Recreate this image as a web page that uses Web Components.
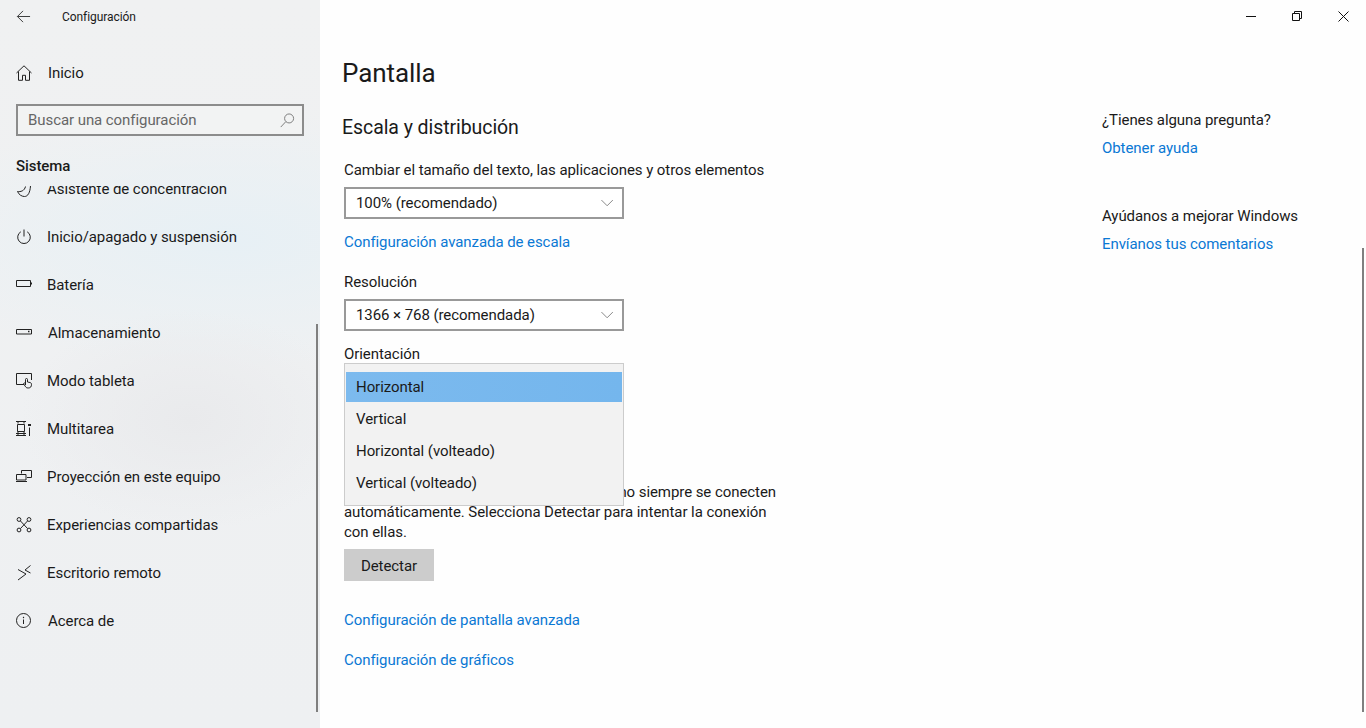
<!DOCTYPE html>
<html lang="es">
<head>
<meta charset="utf-8">
<title>Configuración</title>
<style>
html, body { margin: 0; height: 100%; overflow: hidden; }
body { font-family: Roboto, "Liberation Sans", sans-serif; color: #1a1a1a; letter-spacing: -0.07px; }
</style>
</head>
<body>
<settings-app>
    <side-nav slot="side">
        <nav-item icon="focus">Asistente de concentración</nav-item>
        <nav-item icon="power">Inicio/apagado y suspensión</nav-item>
        <nav-item icon="battery">Batería</nav-item>
        <nav-item icon="storage" wide>Almacenamiento</nav-item>
        <nav-item icon="tablet">Modo tableta</nav-item>
        <nav-item icon="multitask">Multitarea</nav-item>
        <nav-item icon="project">Proyección en este equipo</nav-item>
        <nav-item icon="shared">Experiencias compartidas</nav-item>
        <nav-item icon="remote">Escritorio remoto</nav-item>
        <nav-item icon="info" wide>Acerca de</nav-item>
    </side-nav>
    <display-page slot="page"></display-page>
</settings-app>

<script>
/* Icon paths, all on a 16x16 box */
const ICONS = {
    back: '<path d="M15 8H1.500M7.500 2 1.500 8l6 6"/>',
    home: '<path d="M.5 8 8 .8 15.500 8M2.500 6.500v8.800h4v-5h3v5h4V6.500"/>',
    focus: '<path d="M1.500 10.500c1.500 3.500 4.500 5 7 5 3.500 0 5.500-4 6-10.500M1.500 10.500c3 .5 7-.5 8-5"/>',
    power: '<path d="M8 .5v7M4.800 2.800a6.300 6.300 0 1 0 6.400 0"/>',
    battery: '<path d="M.5 3.500h14v6H.5zM15.500 5.500v2"/>',
    storage: '<path d="M.5 4.500h15v4.500H.5z"/><path d="M12 6.500h1.500" stroke-width="1.300"/>',
    tablet: '<path d="M8 11.500H.5V.5h15v6.500"/><path d="M9.500 12V6.500a1 1 0 0 1 2 0V9l2.500.5c1 .3 1.500.8 1.500 1.800 0 2.200-.8 3.700-3.300 3.700-1.700 0-2.400-.7-3-1.800L7.700 11c-.4-.9.800-1.500 1.800-.5"/>',
    multitask: '<path d="M0 .5h10M2 .5v2M8 .5v2M1.500 3.500h7v7h-7zM0 12.500h10M2 10.500v2M8 10.500v2M0 14.500h10M2 12.500v2M8 12.500v2M13.500 6.500v8.500"/><path d="M12 4h3" stroke-width="2"/>',
    project: '<path d="M5.500 4.500V1.500h10v7H11"/><path d="M.5 5.500h9.500v5.500H.5zM0 12.500h11"/>',
    shared: '<circle cx="3" cy="2.500" r="1.900"/><circle cx="13" cy="2.500" r="1.900"/><circle cx="3" cy="13" r="1.900"/><circle cx="13" cy="13" r="1.900"/><path d="m4.500 4 7 7.500M11.500 4l-7 7.500"/>',
    remote: '<path d="m2 4.500 8 4.500-8 6M14.500 .5 9 5l5.500 3"/>',
    info: '<circle cx="7.500" cy="7.500" r="7"/><path d="M7.500 6.500v4.500"/><path d="M7.500 3.800v1.400" stroke-width="1.200"/>',
    search: '<circle cx="9.700" cy="5.800" r="4.800"/><path d="M6.200 9.200.8 15"/>',
    chevron: '<path d="m.5 3.500 6.500 6.500 6.500-6.500"/>'
};

function iconSvg(name, size) {
    return `<svg width="${size}" height="${size}" viewBox="0 0 16 16" fill="none" stroke="currentColor" stroke-width="1" aria-hidden="true">${ICONS[name]}</svg>`;
}

/* Plain text link */
customElements.define('link-text', class extends HTMLElement {
    constructor() {
        super();
        this.attachShadow({ mode: 'open' }).innerHTML = `
        <style>
        :host { display: block; color: #0a78d4; font-size: 15px; line-height: 20px; }
        </style>
        <slot></slot>`;
    }
});

/* Closed combo box */
customElements.define('combo-box', class extends HTMLElement {
    constructor() {
        super();
        this.attachShadow({ mode: 'open' }).innerHTML = `
        <style>
        :host {
            display: flex; align-items: center; justify-content: space-between;
            box-sizing: border-box; width: 280px; height: 32px;
            border: 2px solid #999; padding: 0 7px 0 10px;
            font-size: 15px; color: #1a1a1a; background: #fff;
        }
        span { display: flex; color: #777; padding-top: 2px; }
        </style>
        <slot></slot><span>${iconSvg('chevron', 14)}</span>`;
    }
});

/* Open drop-down list laid over the page */
customElements.define('combo-menu', class extends HTMLElement {
    constructor() {
        super();
        const items = ['Horizontal', 'Vertical', 'Horizontal (volteado)', 'Vertical (volteado)'];
        this.attachShadow({ mode: 'open' }).innerHTML = `
        <style>
        :host {
            position: absolute; left: 0; top: -1px; z-index: 2;
            box-sizing: border-box; width: 280px; height: 143px;
            display: flex; flex-direction: column;
            background: #f2f2f2; border: 1px solid #ccc; padding: 8px 1px 0;
            font-size: 15px; color: #1a1a1a;
        }
        div { height: 30px; line-height: 30px; margin-bottom: 2px; padding-left: 10px; }
        div.on { background: linear-gradient(90deg, #7cbaee, #74b6ed); }
        </style>
        ${items.map((t, i) => `<div class="${i ? '' : 'on'}">${t}</div>`).join('')}`;
    }
});

/* One row of the side list */
customElements.define('nav-item', class extends HTMLElement {
    constructor() {
        super();
        this.attachShadow({ mode: 'open' }).innerHTML = `
        <style>
        :host {
            display: flex; align-items: center; flex: none;
            height: 48px; padding-left: 16px; gap: 15px;
            font-size: 15px; color: #1a1a1a;
        }
        :host([wide]) { gap: 16px; }
        span { display: flex; color: #222; }
        </style>
        <span>${iconSvg(this.getAttribute('icon'), 16)}</span><slot></slot>`;
    }
});

/* Left pane: back row, home, search, section title and the clipped list */
customElements.define('side-nav', class extends HTMLElement {
    constructor() {
        super();
        this.attachShadow({ mode: 'open' }).innerHTML = `
        <style>
        :host {
            position: relative; display: flex; flex-direction: column;
            box-sizing: border-box; width: 320px; height: 728px; flex: none;
            background:
                radial-gradient(ellipse 170px 110px at 190px 420px, #e9eaec, rgba(233,234,236,0)),
                radial-gradient(ellipse 330px 130px at 230px 240px, #e7f0f5, rgba(231,240,245,0)),
                linear-gradient(180deg, #f0f1f2 0, #eef0f2 100%);
        }
        #top { display: flex; align-items: center; height: 32px; flex: none; }
        #back { display: flex; margin-left: 16px; width: 46px; color: #333; }
        #title { font-size: 12px; padding-top: 2px; }
        #home { margin-top: 17px; }
        #search {
            display: flex; align-items: center; justify-content: space-between; flex: none;
            box-sizing: border-box; height: 32px; margin: 7px 16px 0; padding: 0 7px 0 10px;
            border: 2px solid #8c8c8c; background: #f2f3f3; color: #666; font-size: 15px;
        }
        #search span { display: flex; color: #777; }
        h2 { margin: 20px 0 0 16px; font-size: 15px; font-weight: 500; line-height: 20px; flex: none; }
        #list { display: flex; flex-direction: column; flex: 1; min-height: 0; margin-top: 10px; overflow: hidden; }
        #list slot { display: block; margin-top: -21px; }
        #bar { position: absolute; left: 316px; top: 324px; width: 2px; height: 388px; background: #7f7f7f; }
        </style>
        <div id="top"><span id="back">${iconSvg('back', 15)}</span><span id="title">Configuración</span></div>
        <nav-item id="home" icon="home" wide>Inicio</nav-item>
        <div id="search">Buscar una configuración<span>${iconSvg('search', 15)}</span></div>
        <h2>Sistema</h2>
        <div id="list"><slot></slot></div>
        <div id="bar"></div>`;
    }
});

/* Minimise, restore and close */
customElements.define('window-controls', class extends HTMLElement {
    constructor() {
        super();
        this.attachShadow({ mode: 'open' }).innerHTML = `
        <style>
        :host { display: flex; justify-content: flex-end; height: 32px; flex: none; color: #111; }
        span { display: flex; align-items: center; justify-content: center; width: 46px; height: 32px; }
        </style>
        <span><svg width="10" height="10" viewBox="0 0 10 10" fill="none" stroke="currentColor"><path d="M0 5.500h10"/></svg></span>
        <span><svg width="10" height="10" viewBox="0 0 10 10" fill="none" stroke="currentColor"><path d="M.5 2.500h7v7h-7zM2.500 2.500V.5h7v7h-2"/></svg></span>
        <span><svg width="11" height="11" viewBox="0 0 11 11" fill="none" stroke="currentColor"><path d="m.5.5 10 10M10.500.5l-10 10"/></svg></span>`;
    }
});

/* Right pane: the display settings and the help column */
customElements.define('display-page', class extends HTMLElement {
    constructor() {
        super();
        this.attachShadow({ mode: 'open' }).innerHTML = `
        <style>
        :host { position: relative; display: flex; flex-direction: column; flex: 1; min-width: 0; height: 728px; background: #fefefe; font-size: 15px; }
        #body { display: flex; flex: 1; min-height: 0; }
        #content { width: 782px; box-sizing: border-box; padding-left: 24px; flex: none; display: flex; flex-direction: column; align-items: flex-start; }
        h1 { margin: 21px 0 0 -2px; font-size: 26px; font-weight: 400; line-height: 40px; }
        h2 { margin: 21px 0 0 -2px; font-size: 19.5px; font-weight: 400; line-height: 28px; }
        .label { line-height: 20px; }
        #sizeLabel { margin-top: 18px; }
        combo-box { margin-top: 7px; }
        #resLabel { margin-top: 20px; }
        #oriLabel { margin-top: 13px; }
        #scale { margin-top: 13px; }
        #ori { position: relative; width: 280px; height: 118px; flex: none; }
        p { margin: 0; width: 432px; line-height: 20px; }
        p span { display: block; white-space: nowrap; }
        p span:first-child { text-align: right; }
        #detect { margin-top: 7px; padding-top: 1px; box-sizing: border-box; width: 90px; height: 32px; background: #ccc; display: flex; align-items: center; justify-content: center; }
        #adv { margin-top: 29px; }
        #gfx { margin-top: 20px; }
        aside { margin-top: 78px; }
        aside link-text { margin-top: 8px; }
        #better { margin-top: 48px; }
        #bar { position: absolute; right: 2px; top: 248px; width: 2px; height: 464px; background: #7f7f7f; }
        </style>
        <window-controls></window-controls>
        <div id="body">
            <div id="content">
                <h1>Pantalla</h1>
                <h2>Escala y distribución</h2>
                <div class="label" id="sizeLabel">Cambiar el tamaño del texto, las aplicaciones y otros elementos</div>
                <combo-box>100% (recomendado)</combo-box>
                <link-text id="scale">Configuración avanzada de escala</link-text>
                <div class="label" id="resLabel">Resolución</div>
                <combo-box>1366 × 768 (recomendada)</combo-box>
                <div class="label" id="oriLabel">Orientación</div>
                <div id="ori"><combo-menu></combo-menu></div>
                <p><span>no siempre se conecten</span><span>automáticamente. Selecciona Detectar para intentar la conexión</span><span>con ellas.</span></p>
                <div id="detect">Detectar</div>
                <link-text id="adv">Configuración de pantalla avanzada</link-text>
                <link-text id="gfx">Configuración de gráficos</link-text>
            </div>
            <aside>
                <div class="label">¿Tienes alguna pregunta?</div>
                <link-text>Obtener ayuda</link-text>
                <div class="label" id="better">Ayúdanos a mejorar Windows</div>
                <link-text>Envíanos tus comentarios</link-text>
            </aside>
        </div>
        <div id="bar"></div>`;
    }
});

/* Page frame */
customElements.define('settings-app', class extends HTMLElement {
    constructor() {
        super();
        this.attachShadow({ mode: 'open' }).innerHTML = `
        <style>
        :host { display: flex; width: 1366px; height: 728px; overflow: hidden; }
        </style>
        <slot name="side"></slot><slot name="page"></slot>`;
    }
});
</script>
</body>
</html>
